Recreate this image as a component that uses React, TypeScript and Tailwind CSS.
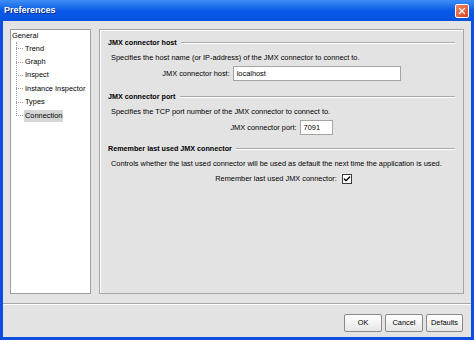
import { Check, X } from "lucide-react";

const font = "font-['Liberation_Sans',Arial,sans-serif]";

const treeItems = ["Trend", "Graph", "Inspect", "Instance Inspector", "Types", "Connection"];

function SectionHeader({ title }: { title: string }) {
  return (
    <div className="flex items-center h-[10px] gap-[4px]">
      <span className="font-bold text-[7.2px] text-black whitespace-nowrap">{title}</span>
      <div className="flex-1 flex flex-col">
        <div className="h-px bg-[#a9a9a9]" />
        <div className="h-px bg-white" />
      </div>
    </div>
  );
}

function XpButton({ label, width }: { label: string; width: string }) {
  return (
    <button
      className={`${width} h-[18px] rounded-[2px] border border-[#8a8a8a] bg-linear-to-b from-white to-[#e6e6e6] text-[7.4px] text-black flex items-center justify-center`}
    >
      {label}
    </button>
  );
}

export default function App() {
  return (
    <div className={`w-[474px] h-[340px] bg-[#0a4fe0] flex flex-col ${font} text-[7.4px] text-black`}>
      {/* Title bar */}
      <div className="h-[21px] shrink-0 flex items-center justify-between pl-[4px] pr-[5px] bg-linear-to-b from-[#3d8ef6] via-[#0b5ae8] to-[#0553dc]">
        <span className="text-white font-bold text-[9px] [text-shadow:1px_1px_0_#0a2a8a]">Preferences</span>
        <div className="w-[14px] h-[14px] rounded-[2px] border border-white bg-linear-to-br from-[#f08a64] to-[#d4401c] flex items-center justify-center">
          <X className="w-[10px] h-[10px] text-white" strokeWidth={3} />
        </div>
      </div>

      {/* Dialog body */}
      <div className="flex-1 mx-[3px] mb-[3px] bg-[#e3e3e3] flex flex-col">
        <div className="flex gap-[8px] pt-[8px] px-[7px]">
          {/* Tree */}
          <div className="w-[81px] h-[265px] bg-white border border-[#9c9c9c] pl-[1px]">
            <div className="h-[12px] flex items-center">General</div>
            <div className="relative ml-[4px]">
              <div className="absolute left-0 top-0 h-[74px] border-l border-dotted border-[#9a9a9a]" />
              {treeItems.map((item) => (
                <div key={item} className="h-[13.4px] flex items-center">
                  <div className="w-[7px] border-t border-dotted border-[#9a9a9a]" />
                  <span
                    className={`ml-[1px] px-[1px] leading-[12px] ${
                      item === "Connection" ? "bg-[#d6d6d6]" : ""
                    }`}
                  >
                    {item}
                  </span>
                </div>
              ))}
            </div>
          </div>

          {/* Settings panel */}
          <div className="flex-1 h-[265px] border border-[#a5a5a5] shadow-[inset_1px_1px_0_#ffffff] px-[8px] pt-[8px] flex flex-col">
            <SectionHeader title="JMX connector host" />
            <div className="mt-[5px] h-[10px] pl-[3px] flex items-center">
              Specifies the host name (or IP-address) of the JMX connector to connect to.
            </div>
            <div className="mt-[3px] flex items-center justify-center gap-[3px]">
              <span>JMX connector host:</span>
              <div className="w-[168px] h-[15px] bg-white border border-[#a4a4a4] flex items-center pl-[3px]">
                localhost
              </div>
            </div>

            <div className="mt-[11px]">
              <SectionHeader title="JMX connector port" />
            </div>
            <div className="mt-[5px] h-[10px] pl-[3px] flex items-center">
              Specifies the TCP port number of the JMX connector to connect to.
            </div>
            <div className="mt-[3px] flex items-center justify-center gap-[3px]">
              <span>JMX connector port:</span>
              <div className="w-[33px] h-[15px] bg-white border border-[#a4a4a4] flex items-center pl-[3px]">
                7091
              </div>
            </div>

            <div className="mt-[9px]">
              <SectionHeader title="Remember last used JMX connector" />
            </div>
            <div className="mt-[5px] h-[10px] pl-[3px] flex items-center">
              Controls whether the last used connector will be used as default the next time the application is used.
            </div>
            <div className="mt-[5px] h-[10px] flex items-center justify-center gap-[5px] pl-[4px]">
              <span>Remember last used JMX connector:</span>
              <div className="w-[10px] h-[10px] bg-white border border-[#3c3c3c] flex items-center justify-center">
                <Check className="w-[8px] h-[8px] text-black" strokeWidth={4} />
              </div>
            </div>
          </div>
        </div>

        {/* Separator */}
        <div className="mt-[9px] flex flex-col">
          <div className="h-px bg-[#a9a9a9]" />
          <div className="h-px bg-white" />
        </div>

        {/* Buttons */}
        <div className="mt-[9px] flex justify-end pr-[8px] gap-[3px]">
          <XpButton label="OK" width="w-[38px]" />
          <XpButton label="Cancel" width="w-[38px]" />
          <XpButton label="Defaults" width="w-[37px]" />
        </div>
      </div>
    </div>
  );
}
